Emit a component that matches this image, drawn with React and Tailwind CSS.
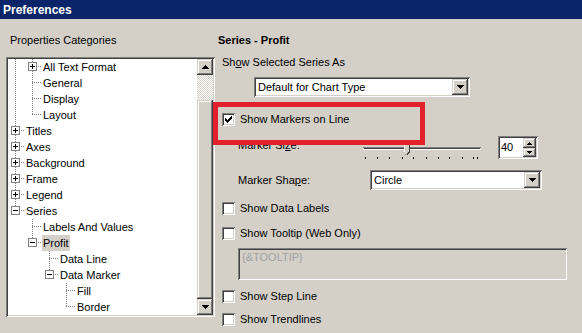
import React from 'react'

const raised =
  'shadow-[inset_-1px_-1px_#404040,inset_1px_1px_#d4d0c8,inset_-2px_-2px_#808080,inset_2px_2px_#ffffff]'
const sunken =
  'shadow-[inset_1px_1px_#808080,inset_-1px_-1px_#ffffff,inset_2px_2px_#404040,inset_-2px_-2px_#d4d0c8]'

const tree = [
  { label: 'All Text Format', level: 1, guides: [true], next: true, box: '+' },
  { label: 'General', level: 1, guides: [true], next: true },
  { label: 'Display', level: 1, guides: [true], next: true },
  { label: 'Layout', level: 1, guides: [true], next: false },
  { label: 'Titles', level: 0, guides: [], next: true, box: '+' },
  { label: 'Axes', level: 0, guides: [], next: true, box: '+' },
  { label: 'Background', level: 0, guides: [], next: true, box: '+' },
  { label: 'Frame', level: 0, guides: [], next: true, box: '+' },
  { label: 'Legend', level: 0, guides: [], next: true, box: '+' },
  { label: 'Series', level: 0, guides: [], next: false, box: '-' },
  { label: 'Labels And Values', level: 1, guides: [false], next: true },
  { label: 'Profit', level: 1, guides: [false], next: false, box: '-', selected: true },
  { label: 'Data Line', level: 2, guides: [false, false], next: true },
  { label: 'Data Marker', level: 2, guides: [false, false], next: false, box: '-' },
  { label: 'Fill', level: 3, guides: [false, false, false], next: true },
  { label: 'Border', level: 3, guides: [false, false, false], next: false },
]

const ticks = [2, 14, 26, 39, 50, 63, 75, 86, 99, 110, 114]

// classic 7x7 check mark
const checkPixels = ['......X', '.....XX', 'X...XXX', 'XX.XXX.', 'XXXXX..', '.XXX...', '..X....']

function Lines({ row }) {
  const w = 17 + 17 * row.level
  const cx = 7 + 17 * row.level
  const dot = { stroke: '#808080', strokeDasharray: '1 1', shapeRendering: 'crispEdges' }
  return (
    <svg width={w} height="16" className="shrink-0">
      {row.guides.map((g, k) =>
        g ? <line key={k} x1={7 + 17 * k + 0.5} y1="0" x2={7 + 17 * k + 0.5} y2="16" {...dot} /> : null
      )}
      <line x1={cx + 0.5} y1="0" x2={cx + 0.5} y2={row.next ? 16 : 8} {...dot} />
      <line x1={cx} y1="7.5" x2={w} y2="7.5" {...dot} />
      {row.box && (
        <g shapeRendering="crispEdges">
          <rect x={cx - 3.5} y="3.5" width="8" height="8" fill="#fff" stroke="#808080" />
          <line x1={cx - 2} y1="7.5" x2={cx + 3} y2="7.5" stroke="#000" />
          {row.box === '+' && <line x1={cx + 0.5} y1="5" x2={cx + 0.5} y2="10" stroke="#000" />}
        </g>
      )}
    </svg>
  )
}

function Arrow({ up, small }) {
  if (small) {
    return (
      <svg width="5" height="3" viewBox="0 0 5 3" shapeRendering="crispEdges">
        <polygon points={up ? '2.5,0 5,3 0,3' : '0,0 5,0 2.5,3'} fill="#000" />
      </svg>
    )
  }
  return (
    <svg width="7" height="4" viewBox="0 0 7 4" shapeRendering="crispEdges">
      <polygon points={up ? '3.5,0 7,4 0,4' : '0,0 7,0 3.5,4'} fill="#000" />
    </svg>
  )
}

function Check({ checked }) {
  return (
    <span className={`w-[13px] h-[13px] bg-white shrink-0 flex items-center justify-center ${sunken}`}>
      {checked && (
        <svg width="7" height="7" viewBox="0 0 7 7" shapeRendering="crispEdges">
          {checkPixels.map((r, y) =>
            r.split('').map((c, x) => (c === 'X' ? <rect key={`${x}-${y}`} x={x} y={y} width="1" height="1" fill="#000" /> : null))
          )}
        </svg>
      )}
    </span>
  )
}

function CheckRow({ label, checked, className = '' }) {
  return (
    <div className={`h-[16px] flex items-center gap-[5px] ml-[4px] ${className}`}>
      <Check checked={checked} />
      <span>{label}</span>
    </div>
  )
}

function Select({ value, className = '' }) {
  return (
    <div className={`h-[20px] flex bg-white p-[2px] ${sunken} ${className}`}>
      <span className="flex-1 pl-[2px] leading-[16px]">{value}</span>
      <span className={`w-[16px] h-[16px] flex items-center justify-center bg-[#d4d0c8] ${raised}`}>
        <Arrow />
      </span>
    </div>
  )
}

function Slider() {
  return (
    <svg width="135" height="23" shapeRendering="crispEdges">
      <line x1="0" y1="11.5" x2="118" y2="11.5" stroke="#808080" />
      <line x1="1" y1="12.5" x2="117" y2="12.5" stroke="#404040" />
      <line x1="0" y1="13.5" x2="118" y2="13.5" stroke="#ffffff" />
      <polygon points="41,7 47,7 47,16 44,19 41,16" fill="#d4d0c8" />
      <polyline points="41.5,16 41.5,7.5 46.5,7.5" fill="none" stroke="#ffffff" />
      <polyline points="46.5,8 46.5,16 44,18.5" fill="none" stroke="#404040" />
      <line x1="42" y1="18.5" x2="43" y2="18.5" stroke="#808080" />
      {ticks.map((t) => (
        <line key={t} x1={t + 0.5} y1="21" x2={t + 0.5} y2="23" stroke="#000" />
      ))}
    </svg>
  )
}

function Spin() {
  return (
    <div className={`w-[40px] h-[23px] flex bg-white p-[2px] ${sunken}`}>
      <span className="flex-1 pl-[1px] leading-[19px]">40</span>
      <div className="w-[13px] flex flex-col">
        <span className={`h-[10px] flex items-center justify-center bg-[#d4d0c8] ${raised}`}>
          <Arrow up small />
        </span>
        <span className={`h-[9px] flex items-center justify-center bg-[#d4d0c8] ${raised}`}>
          <Arrow small />
        </span>
      </div>
    </div>
  )
}

export default function App() {
  return (
    <div className="w-[582px] h-[333px] bg-[#d4d0c8] overflow-hidden relative text-[11px] text-black font-['Liberation_Sans',Arial,sans-serif]">
      {/* Title bar */}
      <div className="h-[19px] bg-[#0a246a] flex items-center pl-[3px]">
        <span className="text-white font-bold text-[12px]">Preferences</span>
      </div>

      <div className="flex">
        {/* Left: categories tree */}
        <div className="w-[218px] pl-[6px] pt-[11px]">
          <div className="h-[20px] flex items-center pl-[4px]">Properties Categories</div>
          <div className={`mt-[7px] w-[209px] h-[260px] bg-white p-[2px] flex ${sunken}`}>
            <div className="flex-1 flex flex-col overflow-hidden">
              {tree.map((row) => (
                <div key={row.label} className="h-[16px] flex shrink-0">
                  <Lines row={row} />
                  <span className={`px-[1px] leading-[16px] whitespace-nowrap ${row.selected ? 'bg-[#d4d0c8]' : ''}`}>
                    {row.label}
                  </span>
                </div>
              ))}
            </div>
            <div className="w-[16px] flex flex-col">
              <span className={`h-[16px] flex items-center justify-center bg-[#d4d0c8] ${raised}`}>
                <Arrow up />
              </span>
              <span className="h-[25px] bg-[repeating-conic-gradient(#ffffff_0_25%,#d4d0c8_0_50%)] bg-size-[2px_2px]" />
              <span className={`h-[199px] bg-[#d4d0c8] ${raised}`} />
              <span className={`h-[16px] flex items-center justify-center bg-[#d4d0c8] ${raised}`}>
                <Arrow />
              </span>
            </div>
          </div>
        </div>

        {/* Right: series properties */}
        <div className="flex-1 flex flex-col pt-[11px]">
          <div className="h-[20px] flex items-center font-bold">Series - Profit</div>
          <div className="mt-[2px] h-[20px] flex items-center pl-[4px]">
            <span>
              Sh<span className="underline">o</span>w Selected Series As
            </span>
          </div>
          <Select value="Default for Chart Type" className="mt-[5px] ml-[36px] w-[216px]" />

          <CheckRow label="Show Markers on Line" checked className="mt-[14px]" />

          <div className="mt-[9px] h-[23px] flex items-center pl-[20px]">
            <span className="w-[125px] mb-[5px]">
              Marker Si<span className="underline">z</span>e:
            </span>
            <Slider />
            <Spin />
          </div>

          <div className="mt-[11px] h-[20px] flex items-center pl-[20px]">
            <span className="w-[132px]">
              Marker Sha<span className="underline">p</span>e:
            </span>
            <Select value="Circle" className="w-[172px]" />
          </div>

          <CheckRow label="Show Data Labels" className="mt-[10px]" />
          <CheckRow label="Show Tooltip (Web Only)" className="mt-[9px]" />
          <div className={`mt-[7px] ml-[20px] w-[329px] h-[32px] p-[3px] pl-[4px] text-[#a0a0a0] leading-[13px] ${sunken}`}>
            {'{&TOOLTIP}'}
          </div>
          <CheckRow label="Show Step Line" className="mt-[8px]" />
          <CheckRow label="Show Trendlines" className="mt-[7px]" />
        </div>
      </div>

      {/* highlight drawn over the dialog */}
      <div className="absolute left-[213px] top-[102px] w-[212px] h-[43px] border-[5px] border-[#e2202b]" />
    </div>
  )
}
